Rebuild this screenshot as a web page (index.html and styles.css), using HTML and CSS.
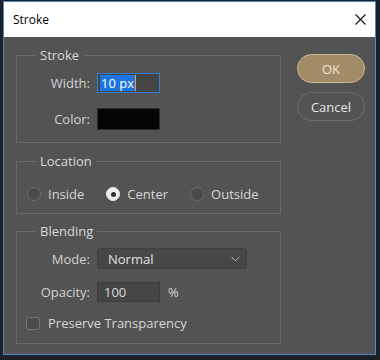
FILE: index.html
```html
<!DOCTYPE html>
<html lang="en">

<head>
    <meta charset="UTF-8">
    <meta name="viewport" content="width=device-width, initial-scale=1.0">
    <title>Stroke</title>
    <link rel="stylesheet" href="styles.css">
</head>

<body>
    <div class="window">
        <div class="titlebar">
            <span class="title">Stroke</span>
            <svg class="close" width="11" height="11" viewBox="0 0 11 11">
                <path d="M0.5 0.5 L10.5 10.5 M10.5 0.5 L0.5 10.5" stroke="#111" stroke-width="1.1" fill="none" />
            </svg>
        </div>

        <div class="dialog">
            <div class="groups">
                <!-- Stroke -->
                <fieldset class="group group-stroke">
                    <legend>Stroke</legend>
                    <div class="row">
                        <label>Width:</label>
                        <div class="field focus"><span class="sel">10 px</span><span class="caret"></span></div>
                    </div>
                    <div class="row row-color">
                        <label>Color:</label>
                        <div class="swatch"></div>
                    </div>
                </fieldset>

                <!-- Location -->
                <fieldset class="group group-location">
                    <legend>Location</legend>
                    <div class="radios">
                        <div class="option"><span class="radio"></span>Inside</div>
                        <div class="option"><span class="radio checked"></span>Center</div>
                        <div class="option"><span class="radio"></span>Outside</div>
                    </div>
                </fieldset>

                <!-- Blending -->
                <fieldset class="group group-blending">
                    <legend>Blending</legend>
                    <div class="row">
                        <label>Mode:</label>
                        <div class="select">
                            <span>Normal</span>
                            <svg width="9" height="6" viewBox="0 0 9 6">
                                <path d="M0.5 0.8 L4.5 4.8 L8.5 0.8" stroke="#bdbdbd" stroke-width="1" fill="none" />
                            </svg>
                        </div>
                    </div>
                    <div class="row row-opacity">
                        <label>Opacity:</label>
                        <div class="field">100</div>
                        <span class="unit">%</span>
                    </div>
                    <div class="check-row">
                        <span class="checkbox"></span>Preserve Transparency
                    </div>
                </fieldset>
            </div>

            <div class="buttons">
                <div class="btn btn-ok">OK</div>
                <div class="btn btn-cancel">Cancel</div>
            </div>
        </div>
    </div>
</body>

</html>
```

FILE: styles.css
```css
* {
    box-sizing: border-box;
}

body {
    margin: 0;
    background-color: #1d2125;
    font-family: "Open Sans", sans-serif;
    font-size: 13px;
}

.window {
    margin: 1px 0 0 3px;
    width: 373px;
    height: 354px;
    border: 1px solid #4a8cc0;
    background-color: #535353;
}

.titlebar {
    height: 35px;
    background-color: #fff;
    display: flex;
    align-items: center;
    justify-content: space-between;
    padding: 0 9px 0 9px;
}

.title {
    font-size: 12px;
    color: #000;
}

.dialog {
    display: flex;
    padding: 10px 9px 0 12px;
}

.groups {
    width: 265px;
}

.group {
    margin: 0;
    border: 1px solid #696969;
    padding: 10px 6px 12px;
    min-width: 0;
}

.group legend {
    margin-left: 13px;
    padding: 0 4px;
    line-height: 16px;
    color: #d9d9d9;
}

.group-location {
    margin-top: 10px;
    padding-top: 16px;
    padding-bottom: 10px;
}

.group-blending {
    margin-top: 9px;
    padding-top: 9px;
}

.row {
    display: flex;
    align-items: center;
}

.row label {
    width: 67px;
    margin-right: 7px;
    text-align: right;
    color: #d2d2d2;
}

.row-color,
.row-opacity {
    margin-top: 15px;
}

.row-opacity {
    margin-top: 13px;
}

.field {
    width: 63px;
    height: 20px;
    background-color: #454545;
    border: 1px solid #3c3c3c;
    color: #dcdcdc;
    display: flex;
    align-items: center;
    padding-left: 6px;
}

.field.focus {
    border-color: #2f7fd4;
    padding-left: 2px;
}

.field .sel {
    background-color: #1b74e0;
    color: #fff;
    line-height: 16px;
    padding: 0 1px;
}

.field .caret {
    width: 1px;
    height: 16px;
    background-color: #f0a040;
}

.swatch {
    width: 63px;
    height: 22px;
    background-color: #050505;
    border: 1px solid #2e2e2e;
}

.radios {
    display: flex;
    align-items: center;
    gap: 22px;
    padding-left: 4px;
    height: 18px;
}

.option {
    display: flex;
    align-items: center;
    gap: 7px;
    color: #d6d6d6;
}

.radio {
    width: 14px;
    height: 14px;
    border-radius: 50%;
    border: 1px solid #6c6c6c;
    background-color: #4a4a4a;
    display: flex;
    align-items: center;
    justify-content: center;
}

.radio.checked {
    background-color: #ececec;
    border-color: #ececec;
}

.radio.checked::after {
    content: "";
    width: 5px;
    height: 5px;
    border-radius: 50%;
    background-color: #333;
}

.select {
    width: 150px;
    height: 21px;
    background-color: #474747;
    border: 1px solid #404040;
    border-radius: 3px;
    display: flex;
    align-items: center;
    justify-content: space-between;
    padding: 0 6px 0 10px;
    color: #e0e0e0;
}

.unit {
    margin-left: 8px;
    color: #d6d6d6;
}

.check-row {
    display: flex;
    align-items: center;
    gap: 8px;
    height: 16px;
    margin-top: 13px;
    padding-left: 3px;
    color: #d6d6d6;
}

.checkbox {
    width: 14px;
    height: 13px;
    border: 1px solid #737373;
    border-radius: 2px;
    background-color: #4c4c4c;
}

.buttons {
    margin-left: 16px;
    margin-top: 7px;
    width: 68px;
}

.btn {
    height: 29px;
    border-radius: 15px;
    display: flex;
    align-items: center;
    justify-content: center;
    font-size: 13px;
}

.btn-ok {
    background-color: #a28c68;
    border: 1px solid #ccb793;
    color: #f0e7d6;
}

.btn-cancel {
    margin-top: 9px;
    border: 1px solid #6f6f6f;
    color: #e6e6e6;
}
```
